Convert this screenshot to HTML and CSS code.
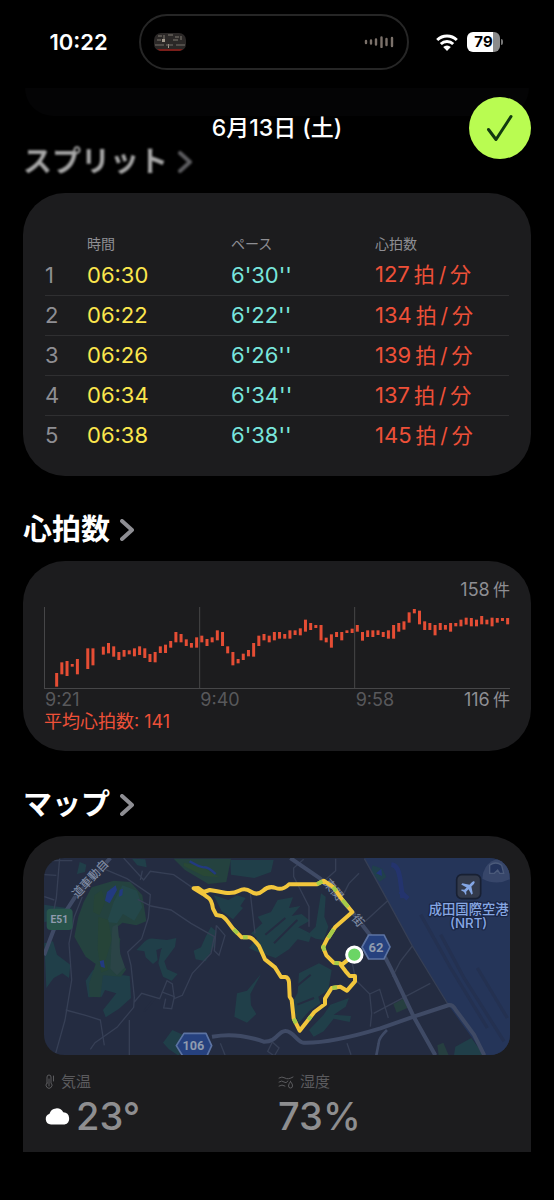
FILE: index.html
```html
<!DOCTYPE html>
<html lang="ja">
<head>
<meta charset="UTF-8" />
<meta name="viewport" content="width=device-width, initial-scale=1" />
<title>6月13日(土)</title>
<link rel="stylesheet" href="styles.css">
</head>
<body>
  <div class="status-bar">
    <span class="clock">10:22</span>
    <div class="island">
      <svg class="artwork" viewBox="0 0 32 18" aria-hidden="true">
        <rect width="32" height="18" rx="7" fill="#2b2827"/>
        <path d="M4 3h4M10 2v4M14 2h5M21 4h4M27 3v4M3 7h4M19 7h5" stroke="#55514c" stroke-width="2"/>
        <path d="M8 6h3v3H8zM14 11h1v4h-1z" fill="#a39a8d"/>
        <path d="M1 12h30" stroke="#77706a" stroke-dasharray="9 2 7 3"/>
        <path d="M3 16h26l-3 2H6z" fill="#7a1e1a"/>
      </svg>
      <svg class="wave" viewBox="0 0 30 12" aria-hidden="true">
        <path d="M2 5v2M7 4.500v3M12 3.500v5M17.500 1.500v9.500M22.500 3v6M28 2v8" stroke="#7b716a" stroke-width="2.400" stroke-linecap="round"/>
      </svg>
    </div>
    <div class="indicators">
      <svg class="wifi" viewBox="0 0 22 17" aria-hidden="true">
        <g fill="none" stroke="#fff" stroke-width="3">
          <path d="M1.200 6a14 14 0 0 1 19.600 0"/>
          <path d="M4.800 10a9 9 0 0 1 12.400 0"/>
        </g>
        <path d="M11 17l-3.800-4a5.500 5.500 0 0 1 7.600 0z" fill="#fff"/>
      </svg>
      <div class="battery"><span class="battery-level">79</span></div>
    </div>
  </div>

  <header class="top-bar">
    <h1>6月13日 (土)</h1>
    <button class="done" type="button" aria-label="完了">
      <svg viewBox="0 0 28 28" aria-hidden="true"><path d="M2.500 15.500L10 25.500 25 2.500"/></svg>
    </button>
  </header>

  <main>
    <section>
      <h2 class="faded"><a href="#splits">スプリット<svg class="chevron" viewBox="0 0 14 22" aria-hidden="true"><path d="M2 2l10 9L2 20"/></svg></a></h2>
      <div class="card splits-card" id="splits">
        <table class="splits">
          <thead>
            <tr><th class="col-no"></th><th class="col-time">時間</th><th class="col-pace">ペース</th><th>心拍数</th></tr>
          </thead>
          <tbody>
            <tr><td class="no">1</td><td class="time">06:30</td><td class="pace">6'30''</td><td class="bpm">127<span>拍&thinsp;/&thinsp;分</span></td></tr>
            <tr><td class="no">2</td><td class="time">06:22</td><td class="pace">6'22''</td><td class="bpm">134<span>拍&thinsp;/&thinsp;分</span></td></tr>
            <tr><td class="no">3</td><td class="time">06:26</td><td class="pace">6'26''</td><td class="bpm">139<span>拍&thinsp;/&thinsp;分</span></td></tr>
            <tr><td class="no">4</td><td class="time">06:34</td><td class="pace">6'34''</td><td class="bpm">137<span>拍&thinsp;/&thinsp;分</span></td></tr>
            <tr><td class="no">5</td><td class="time">06:38</td><td class="pace">6'38''</td><td class="bpm">145<span>拍&thinsp;/&thinsp;分</span></td></tr>
          </tbody>
        </table>
      </div>
    </section>

    <section>
      <h2><a href="#heart">心拍数<svg class="chevron" viewBox="0 0 14 22" aria-hidden="true"><path d="M2 2l10 9L2 20"/></svg></a></h2>
      <div class="card heart-card" id="heart">
        <p class="chart-max">158&thinsp;<span>件</span></p>
        <svg class="chart" viewBox="0 0 1398 246" preserveAspectRatio="none" role="img" aria-label="心拍数">
          <path class="grid" d="M1.500 0V246M467 0V246M932 0V246M0 244.500H1398"/>
          <g class="bars" id="bars"></g>
        </svg>
        <div class="axis">
          <span>9:21</span>
          <span>9:40</span>
          <div class="axis-end"><span>9:58</span><span class="chart-min">116&thinsp;<span>件</span></span></div>
        </div>
        <p class="average">平均心拍数: 141</p>
      </div>
    </section>

    <section>
      <h2><a href="#map">マップ<svg class="chevron" viewBox="0 0 14 22" aria-hidden="true"><path d="M2 2l10 9L2 20"/></svg></a></h2>
      <div class="card map-card" id="map">
        <svg class="map" viewBox="0 0 1398 592" preserveAspectRatio="xMidYMid slice" role="img" aria-label="ルート">
          <rect width="1398" height="592" fill="#242c41"/>

          <!-- airport grounds -->
          <path d="M961 0H1398V592H1322L1215 444 1105 264 1031 128z" fill="#253559"/>
          <g stroke="#24325300" fill="none">
            <path d="M1130 170l90 160 110 180M1190 230l70 130 120 190M1300 330l90 150" stroke="#243151" stroke-width="10"/>
          </g>
          <path d="M1042 20c18 2 22 20 26 40l8 60M1068 100l24 22" stroke="#233577" stroke-width="14" fill="none" opacity=".7"/>
          <path d="M985 22l30 10 12 25-20 14-25-26z" fill="#20404c"/>
          <path d="M996 46l16-14 2 22z" fill="#223578"/>

          <!-- woods -->
          <g transform="translate(-71 -234)" fill="#203f49">
            <path d="M178 246l20 8-4 22-24 6zM335 236l40 2 4 24-28-6z"/>
            <path d="M368 490q14-18 34-14l38 4-4 20-28 10 4 30-14 12-22-20-4-18-24-4zM440 480l28-6-4 26-32 44 8 24 32 14-18 20-26-12-14-40 8-40z"/>
            <path d="M572 440l16 14-4 40-28 50-30-6-6-26 22-10 14-32zM72 490l26-6 12 40 40 30-4 40-20-14-26 14-22 30zM72 374l82 12-10 30-72 10z"/>
            <path d="M218 570l40 10 70 8 4 66-36 32-40 26-8-22 40-50-34-10-10 20-40 2-8-50z"/>
            <path d="M650 640l30-8 42-50-32 60 2 34 16 26-28 26-38-18z"/>
            <path d="M428 788l28-38 40 18-20 60-30-20zM630 240h130l-8 36-50 18-70-10z"/>
          </g>
          <g transform="translate(-71 -234)">
            <path d="M190 366l24-44 66-20 50 4 36 40 12 78-30 12-42-8-24 20 18 30-8 60 26 30-16 22-54-4-8 66-32-2-2-38 20-60-30-22-34-60 12-60z" fill="#24423f"/>
            <path d="M306 316l44 16 16 50-24 40-34-20-18 28-30-4 20-60z" fill="#24474a"/>
            <path d="M244 330l10 36-16 40-20-10 4-50zM234 410l30 10 10 60-18 60 8 30-22 8-10-70z" fill="#264438"/>
            <path d="M276 440l16-8 8 90 14 40-24 24-20-20z" fill="#2b4447"/>
            <path d="M254 362l6-26 26-20 4 14-22 40zM298 330l10-4-2 20-10 4zM238 544l12-4 4 24-12-4z" fill="#223a80"/>
            <path d="M460 236h172l-14 70-54 6-70-42z" fill="#24423f"/>
            <path d="M490 248l60 14 46 30-46-4-60-30z" fill="#294835"/>
            <path d="M508 244q34 20 44 18t34 20" stroke="#223a80" stroke-width="7" fill="none"/>
          </g>
          <g transform="translate(379 -24)" fill="#203f49">
            <path d="M130 136l44 14 26-14 26 8-16 24 8 6-30 34-34-24z"/>
            <path d="M262 200l40-14 20-36 46-8-12 32 34-6-26 30 30-6 24 20-34 20 40 20-8 24-34-8-26 30-40 26-60-20-20-10 24-30-18-14 34-30z"/>
            <path d="M452 130l14 10-4 60 12 30-14 40-24-4-24-12 24-24z"/>
            <path d="M386 370l60-30 38 20-10 60-30 20 6 20-34 24-30 34-26-50 22-40z"/>
            <path d="M416 540l44-46 20-30 56-20-10 26-36 24 52 4-4 18-48-10-30 38-30 16z"/>
          </g>
          <g stroke="#242c41" stroke-width="6" fill="none">
            <path d="M664 230l60-50M690 256l70-70M740 400l60-50M760 440l50-20M300 460l50-60"/>
          </g>
          <g fill="#263f40">
            <path d="M1048 438l34-18 8 30-32 14z"/>
            <path d="M1180 562l18-8 16 38h-30z"/>
          </g>
          <path d="M1234 566l48-26 38 52h-90z" fill="#203f49"/>

          <!-- small roads -->
          <g class="lane">
            <g transform="translate(-71 -234)">
              <path d="M118 234l-10 120-16 80M72 284l36 2M72 350l30 10M186 350l-24 60-16 80 8 110-20 120-28 100M136 690l60 16 44 14 12 76"/>
              <path d="M240 262l80 34 70 48-6 70-20 62-42 40 10 40 10 96-2 30-50 60-66 46-14 20M327 720v110M342 666l22-26 54 16 22-54 16 10 6 44 24-10 30-66 56-60 10-50-70-40-60-40-60-12-40-20M588 436l26 30-18 60-14-14 6-76"/>
              <path d="M436 656l-6 28 24 2 8-36-38-14M310 234l60 66 20-26 70 10 90 62M360 300l6-28M600 790l16 40M690 340l14 120M756 786l20 18-14 24-20-14zM80 242h76"/>
            </g>
            <g transform="translate(709 -84)">
              <path d="M252 86l70 126 74 136 110 180M322 212l-72 66M396 348l-36 46-24 46M86 290v-60l-46-90v-26l30-26M166 86v36l-34 30M236 130l-30 30-20 40M216 400l10 50 42 42 30-14 26 86M268 490l6 60-4 40M280 550l170-90M200 640l12 34"/>
            </g>
          </g>

          <!-- trunk roads -->
          <g class="trunk">
            <path d="M739 0L829 62 924 161 974 226Q1014 276 1040 330L1109 476 1174 592"/>
            <path d="M504 536Q550 528 590 534T659 551C700 552 700 520 724 519S760 554 779 554Q860 556 1009 511L1109 476 1215 441Q1226 440 1234 454L1290 530 1321 592"/>
            <path class="narrow" d="M1029 516Q1004 540 1004 556L997 592"/>
            <path d="M0 292L29 216 94 116 199 0"/>
          </g>
          <g class="road-name">
            <text transform="translate(100 122) rotate(-47)">道車動自</text>
            <text transform="translate(836 76) rotate(50)">東関</text>
            <text transform="translate(922 182) rotate(50)">街</text>
          </g>

          <!-- road shields -->
          <rect x="8" y="152" width="78" height="64" rx="12" fill="#28544b"/>
          <text class="shield" x="46" y="196" font-size="31">E51</text>
          <path class="hex" d="M420 526h66l17 37-17 37h-66l-23-37z"/>
          <text class="shield" x="448" y="575" font-size="38">106</text>
          <path class="hex" d="M974 231h46l18 36-18 36h-46l-20-36z"/>
          <text class="shield" x="996" y="281" font-size="39">62</text>

          <!-- airport -->
          <path d="M1315 62q0-18 10-34 16-24 40-24 32 4 32 60-40 20-82-2z" fill="#37466a"/>
          <path d="M1337 46V22q18-14 36 0l6 24h-12l-6-10-10 10z" fill="#22325a" stroke="#4b5a7a" stroke-width="4"/>
          <rect x="1238" y="50" width="72" height="72" rx="15" fill="#333a4b" stroke="#182033" stroke-width="5"/>
          <path d="M0-23c3 0 4 5 4 8v9l18 12v5L4 6v10l6 5v3l-10-3-10 3v-3l6-5V6l-18 5V6L-4-6v-9c0-3 1-8 4-8z" transform="translate(1275 87) rotate(45)" fill="#83a5e3"/>
          <text class="place" x="1274" y="167">成田国際空港</text>
          <text class="place" x="1274" y="210">(NRT)</text>

          <!-- workout route -->
          <g transform="translate(379 -24)">
            <path class="route" d="M552 314L512 346 526 364 538 378H554V394L530 422 510 410 484 414 464 446V462L432 486 404 522 388 542 370 506 364 450 358 440 356 396Q354 382 345 381H332L314 352 284 328 266 288Q246 262 236 262H214L188 236 170 212Q160 198 150 197L138 195 128 176Q124 148 112 142L98 132 70 115 84 114 100 126 118 120Q140 124 164 128T206 122 242 125 278 122 316 114 356 103H440L460 92 490 112 512 144 546 186 494 232 470 268 458 292 468 316 490 338 508 340"/>
            <path class="pace-mark" d="M440 103l16-9M488 111l10 13M516 150l18 21M490 238l-16 26M458 286l4 16M492 339l14 1M486 414l14-2M190 238l12 12M218 262h14M370 506l7 14M414 509l8-10"/>
            <circle cx="552" cy="314" r="23" fill="#6bd565" stroke="#fff" stroke-width="9"/>
          </g>
        </svg>

        <dl class="weather">
          <div>
            <dt>
              <svg class="icon-temp" viewBox="0 0 10 16" aria-hidden="true"><path d="M2 9V3a2 2 0 0 1 4 0v6a3 3 0 1 1-4 0zM4 5v7M8.500 2v5"/></svg>
              気温
            </dt>
            <dd>
              <svg class="cloud" viewBox="0 0 26 18" aria-label="くもり"><path d="M6 17.500A5.500 5.500 0 0 1 4.500 6.800 7.500 7.500 0 0 1 18.300 5.300 6.200 6.200 0 0 1 19.500 17.500z"/></svg>
              23°
            </dd>
          </div>
          <div>
            <dt>
              <svg class="icon-humid" viewBox="0 0 16 14" aria-hidden="true"><path d="M1 3q3-2 6 0t8-1M1 7q3-2 5 0t4-1M1 11q3-2 6 0M12.500 6.500q2.500 3 2 4.500a2 2 0 0 1-4 0q0-2 2-4.500z"/></svg>
              湿度
            </dt>
            <dd>73%</dd>
          </div>
        </dl>
      </div>
    </section>
  </main>

<script src="script.js"></script>
</body>
</html>
```
FILE: styles.css
```css
* {
  box-sizing: border-box;
}
body {
  margin: 0;
  background: #000;
  color: #fff;
  font-family: Inter, 'Noto Sans CJK JP', sans-serif;
}
h1, h2, p, dl, dd {
  margin: 0;
}
svg {
  display: block;
  flex: none;
}

/* status bar */
.status-bar {
  display: grid;
  grid-template-columns: 1fr auto 1fr;
  height: 84px;
  padding: 14px 6px 14px 0;
}
.clock {
  padding-left: 18px;
  text-align: center;
  font-size: 22px;
  font-weight: 600;
  line-height: 56px;
}
.island {
  display: flex;
  align-items: center;
  justify-content: space-between;
  width: 270px;
  padding: 0 13px;
  border: 2px solid #262626;
  border-radius: 28px;
}
.artwork {
  width: 32px;
  height: 18px;
}
.wave {
  width: 30px;
  height: 12px;
}
.indicators {
  display: flex;
  align-items: center;
  gap: 9px;
  padding-left: 27px;
}
.wifi {
  width: 22px;
  height: 17px;
}
.battery {
  position: relative;
  width: 33px;
  height: 20px;
  border-radius: 6px;
  background: linear-gradient(90deg, #fff 79%, #8b8b8b 79%);
}
.battery::after {
  content: "";
  position: absolute;
  top: 7px;
  right: -3px;
  width: 2px;
  height: 6px;
  border-radius: 0 2px 2px 0;
  background: #777;
}
.battery-level {
  display: block;
  color: #000;
  text-align: center;
  font-size: 15px;
  font-weight: 700;
  line-height: 20px;
}

/* title bar, floats over the scrolled content */
.top-bar {
  position: relative;
  z-index: 1;
  display: grid;
  grid-template-columns: 62px 1fr 62px;
  align-items: center;
  margin-bottom: -17px;
  padding: 13px 23px 0;
}
.top-bar::before {
  content: "";
  position: absolute;
  z-index: -1;
  top: 4px;
  left: 25px;
  right: 25px;
  height: 28px;
  border-radius: 0 0 28px 28px;
  background: #040405;
}
.top-bar h1 {
  grid-column: 2;
  text-align: center;
  font-size: 23px;
  font-weight: 500;
  line-height: 30px;
}
.done {
  display: flex;
  align-items: center;
  justify-content: center;
  width: 62px;
  height: 62px;
  padding: 0;
  border: none;
  border-radius: 50%;
  background: #b9fc51;
  cursor: pointer;
}
.done svg {
  width: 28px;
  height: 28px;
  fill: none;
  stroke: #123a10;
  stroke-width: 3;
  stroke-linecap: round;
  stroke-linejoin: round;
}

/* sections */
main {
  display: flex;
  flex-direction: column;
  gap: 34px;
  padding: 0 23px 48px;
}
h2 {
  margin-bottom: 11px;
  font-size: 29px;
  font-weight: 700;
  line-height: 40px;
}
h2 a {
  display: inline-flex;
  align-items: center;
  gap: 10px;
  color: inherit;
  text-decoration: none;
}
h2.faded {
  filter: blur(1px);
  opacity: .65;
}
.chevron {
  width: 14px;
  height: 22px;
  fill: none;
  stroke: #8e8e93;
  stroke-width: 4;
  stroke-linecap: round;
  stroke-linejoin: round;
}
.card {
  padding: 18px 21px;
  border-radius: 42px;
  background: #1c1c1e;
}

/* splits */
.splits-card {
  padding: 43px 22px 21px;
}
.splits {
  width: 100%;
  border-collapse: collapse;
  table-layout: fixed;
}
.splits th {
  height: 19px;
  padding: 0;
  color: #8e8e93;
  text-align: left;
  vertical-align: top;
  font-size: 14px;
  font-weight: 400;
  line-height: 16px;
}
.col-no {
  width: 42px;
}
.col-time, .col-pace {
  width: 144px;
}
.splits td {
  height: 40px;
  padding: 0;
  border-bottom: 1px solid #2f2f31;
  font-size: 22px;
  line-height: 30px;
}
.splits tr:last-child td {
  border-bottom: none;
}
.no {
  color: #8e8e93;
}
.time {
  color: #fbe64d;
}
.pace {
  color: #78e5dc;
}
.bpm {
  color: #ee5038;
}
.bpm span {
  margin-left: 4px;
  font-size: 21px;
}

/* heart rate */
.heart-card {
  font-size: 18px;
  line-height: 22px;
}
.chart-max {
  margin-bottom: 6px;
  text-align: right;
}
.chart-max, .chart-min {
  color: #8e8e93;
}
.chart-max span, .chart-min span {
  font-size: 17px;
}
.chart {
  width: 100%;
  height: 82px;
}
.grid {
  fill: none;
  stroke: #464648;
  stroke-width: 3;
}
.bars {
  stroke: #e54d34;
  stroke-width: 9;
}
.axis {
  display: grid;
  grid-template-columns: repeat(3, 1fr);
  color: #58585b;
}
.axis > span, .axis-end {
  padding-left: 1px;
}
.axis-end {
  display: flex;
  justify-content: space-between;
}
.average {
  color: #ee5038;
}

/* map */
.map-card {
  padding: 22px 21px 12px;
  border-radius: 42px 42px 0 0;
}
.map {
  width: 100%;
  border-radius: 20px;
}
.lane {
  fill: none;
  stroke: #363f55;
  stroke-width: 4;
}
.trunk {
  fill: none;
  stroke: #3f4a65;
  stroke-width: 12;
  stroke-linejoin: round;
}
.trunk .narrow {
  stroke-width: 8;
}
.road-name {
  fill: #7c88a0;
  stroke: #242c41;
  stroke-width: 4;
  paint-order: stroke;
  font-size: 35px;
  font-weight: 500;
}
.shield {
  fill: #8f9bae;
  text-anchor: middle;
  font-family: Roboto, sans-serif;
  font-weight: 700;
}
.hex {
  fill: #26417e;
  stroke: #5c73a2;
  stroke-width: 5;
  stroke-linejoin: round;
}
.place {
  fill: #86a7e3;
  stroke: #1a2543;
  stroke-width: 8;
  stroke-linejoin: round;
  paint-order: stroke;
  text-anchor: middle;
  font-size: 40px;
  font-weight: 500;
}
.route, .pace-mark {
  fill: none;
  stroke: #f2c63c;
  stroke-width: 12;
  stroke-linecap: round;
  stroke-linejoin: round;
}
.pace-mark {
  stroke: #a5cb48;
  stroke-linecap: butt;
}

/* weather */
.weather {
  display: grid;
  grid-template-columns: 1fr 1fr;
  margin-top: 17px;
}
.weather dt {
  display: flex;
  align-items: center;
  gap: 6px;
  padding-left: 1px;
  color: #5b5b5e;
  font-size: 15px;
  line-height: 20px;
}
.weather dd {
  display: flex;
  align-items: center;
  gap: 5px;
  padding-left: 1px;
  color: #8e8e90;
  font-size: 38px;
  font-weight: 500;
  line-height: 48px;
}
.icon-temp, .icon-humid {
  width: 10px;
  height: 16px;
  fill: none;
  stroke: #5b5b5e;
  stroke-linecap: round;
}
.icon-humid {
  width: 16px;
}
.cloud {
  width: 26px;
  height: 18px;
  fill: #fff;
}
```
FILE: script.js
```js
// [top, bottom] of every heart rate sample, null where nothing was recorded
const samples = [
  [198, 239], [166, 202], [162, 207], [171, 179], [156, 202], null, [124, 186], [124, 175],
  null, [119, 143], [108, 139], [118, 149], [135, 159], [129, 149], [130, 142], [124, 148],
  [118, 144], [124, 153], [141, 165], [135, 166], [118, 138], [113, 138], [102, 122], [75, 106],
  [81, 106], [97, 117], [108, 122], [91, 122], [86, 106], [96, 117], [91, 106], [70, 100],
  [75, 117], [118, 139], [135, 175], [156, 169], [140, 159], [129, 148], [108, 149], [86, 117],
  [81, 100], [86, 106], [75, 100], [75, 95], [81, 95], [70, 95], [70, 84], [64, 85],
  [38, 74], [48, 69], [54, 63], [54, 100], [92, 106], [82, 122], [75, 90], [75, 100],
  [70, 78], [65, 78], [54, 74], [75, 101], [70, 90], [70, 90], [70, 84], [75, 90],
  [70, 95], [54, 95], [48, 74], [43, 68], [16, 47], [6, 19], [11, 52], [43, 69],
  [48, 69], [54, 85], [48, 69], [54, 68], [48, 74], [48, 58], [38, 58], [32, 53],
  [33, 58], [38, 58], [27, 52], [38, 52], [32, 58], [33, 47], [33, 42], [33, 52]
];

const bars = document.getElementById('bars');
const step = 15.55;

samples.forEach((sample, i) => {
  if (!sample) return;
  const x = (38 + i * step).toFixed(1);
  const line = document.createElementNS('http://www.w3.org/2000/svg', 'line');
  line.setAttribute('x1', x);
  line.setAttribute('x2', x);
  line.setAttribute('y1', sample[0]);
  line.setAttribute('y2', sample[1]);
  bars.appendChild(line);
});
```
